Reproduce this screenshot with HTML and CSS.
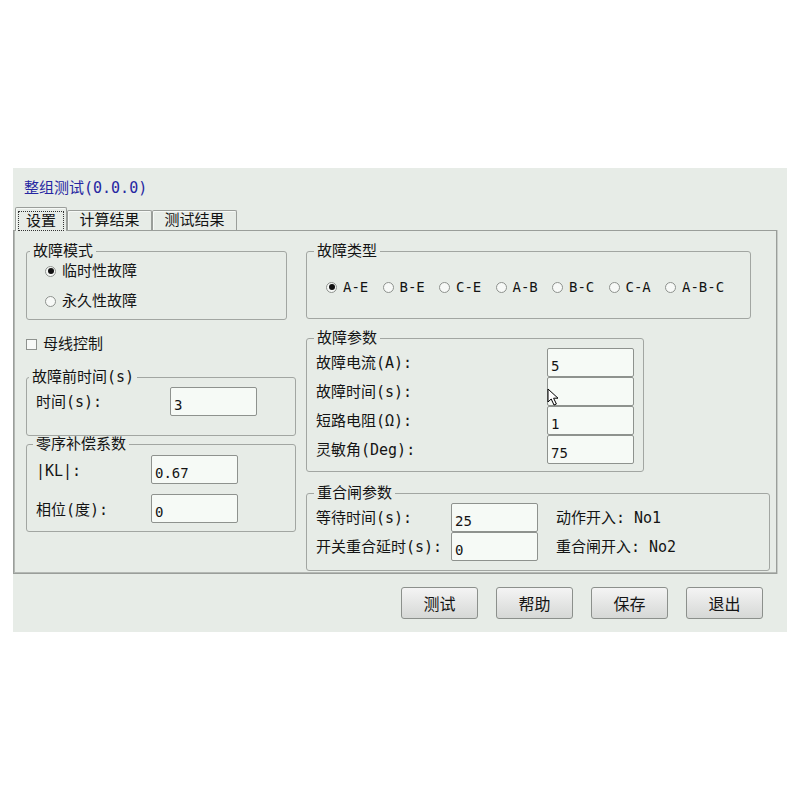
FILE: index.html
```html
<!DOCTYPE html>
<html lang="zh">
<head>
<meta charset="utf-8">
<title>整组测试</title>
<link rel="stylesheet" href="styles.css">
</head>
<body>
<div class="app">
  <div class="title">整组测试(0.0.0)</div>
  <div class="tabs">
    <div class="tab active"><span class="focus">设置</span></div>
    <div class="tab">计算结果</div>
    <div class="tab">测试结果</div>
  </div>
  <div class="pane">
    <div class="col col-left">
      <fieldset class="group g-mode">
        <legend class="lg-near">故障模式</legend>
        <div class="radio-list">
          <div class="opt"><span class="radio on"></span>临时性故障</div>
          <div class="opt"><span class="radio"></span>永久性故障</div>
        </div>
      </fieldset>
      <div class="check-row"><span class="checkbox"></span>母线控制</div>
      <fieldset class="group g-pre">
        <legend class="lg-near">故障前时间(s)</legend>
        <div class="form form-pre">
          <span class="lbl">时间(s):</span>
          <input class="field" type="text" value="3" readonly>
        </div>
      </fieldset>
      <fieldset class="group g-zero">
        <legend>零序补偿系数</legend>
        <div class="form form-zero">
          <span class="lbl lbl-low">|KL|:</span>
          <input class="field" type="text" value="0.67" readonly>
          <span class="lbl lbl-low">相位(度):</span>
          <input class="field" type="text" value="0" readonly>
        </div>
      </fieldset>
    </div>
    <div class="col col-right">
      <fieldset class="group g-type">
        <legend>故障类型</legend>
        <div class="type-row">
          <div class="opt"><span class="radio on"></span>A-E</div>
          <div class="opt"><span class="radio"></span>B-E</div>
          <div class="opt"><span class="radio"></span>C-E</div>
          <div class="opt"><span class="radio"></span>A-B</div>
          <div class="opt"><span class="radio"></span>B-C</div>
          <div class="opt"><span class="radio"></span>C-A</div>
          <div class="opt"><span class="radio"></span>A-B-C</div>
        </div>
      </fieldset>
      <fieldset class="group g-param">
        <legend>故障参数</legend>
        <div class="form form-param">
          <span class="lbl">故障电流(A):</span>
          <input class="field" type="text" value="5" readonly>
          <span class="lbl">故障时间(s):</span>
          <span class="field-wrap">
            <input class="field" type="text" value="" readonly>
            <svg class="cursor" width="14" height="18" viewBox="0 0 14 18"><path d="M1 1 L1 14 L4.2 11 L7 17 L9.4 16 L6.6 10.2 L11 10.2 Z" fill="#fff" stroke="#000" stroke-width="1" stroke-linejoin="round"/></svg>
          </span>
          <span class="lbl">短路电阻(Ω):</span>
          <input class="field" type="text" value="1" readonly>
          <span class="lbl">灵敏角(Deg):</span>
          <input class="field" type="text" value="75" readonly>
        </div>
      </fieldset>
      <fieldset class="group g-reclose">
        <legend>重合闸参数</legend>
        <div class="form form-reclose">
          <span class="lbl">等待时间(s):</span>
          <input class="field" type="text" value="25" readonly>
          <span class="info">动作开入: No1</span>
          <span class="lbl">开关重合延时(s):</span>
          <input class="field" type="text" value="0" readonly>
          <span class="info">重合闸开入: No2</span>
        </div>
      </fieldset>
    </div>
  </div>
  <div class="buttons">
    <button class="btn" type="button">测试</button>
    <button class="btn" type="button">帮助</button>
    <button class="btn" type="button">保存</button>
    <button class="btn" type="button">退出</button>
  </div>
</div>
</body>
</html>
```

FILE: styles.css
```css
* { box-sizing: border-box; }

body {
  margin: 0;
  background: #ffffff;
  font-family: "DejaVu Sans Mono", "Noto Sans CJK SC", monospace;
  font-size: 15px;
  color: #141414;
}

.app {
  margin: 168px 0 0 13px;
  width: 774px;
  height: 464px;
  background: #e7ece7;
  padding-top: 10px;
}

.title {
  padding-left: 11px;
  line-height: 20px;
  height: 20px;
  color: #2626a2;
}

.tabs {
  margin-top: 9px;
  height: 24px;
  display: flex;
  align-items: flex-end;
  padding-left: 2px;
  position: relative;
  z-index: 1;
  margin-bottom: -1px;
}

.tab {
  width: 85px;
  height: 20px;
  margin-bottom: 1px;
  border: 1px solid #9a9e9a;
  border-bottom: none;
  border-radius: 2px 2px 0 0;
  background: #e7ece7;
  line-height: 19px;
  text-align: center;
  box-shadow: inset 1px 1px 0 #f6f9f6;
}

.tab.active {
  width: 52px;
  height: 24px;
  margin-bottom: 0;
  padding: 3px 2px 0 2px;
  line-height: 18px;
}

.focus {
  display: block;
  border: 1px dotted #333;
  height: 20px;
  line-height: 18px;
}

.pane {
  height: 344px;
  width: 764px;
  border: 1px solid #9a9e9a;
  box-shadow: inset 1px -1px 0 #b4b8b4, 1px 0 0 #c8ccc8;
  padding: 12px 0 0 12px;
  display: flex;
  gap: 10px;
  align-items: flex-start;
}

.col {
  display: flex;
  flex-direction: column;
  align-items: flex-start;
}

.group {
  margin: 0;
  min-width: 0;
  border: 1px solid #a2a6a2;
  border-radius: 3px;
  padding: 0 0 0 9px;
}

.group legend {
  font-size: 15px;
  line-height: 16px;
  padding: 0 3px;
  margin-left: -2px;
}

.group legend.lg-near {
  margin-left: -6px;
}

.g-mode { width: 261px; height: 77px; padding-top: 2px; }
.g-mode .radio-list { margin-left: 9px; }
.check-row { margin-top: 14px; height: 20px; display: flex; align-items: center; gap: 6px; line-height: 20px; }
.g-pre { margin-top: 15px; width: 270px; height: 67px; padding-top: 2px; }
.g-pre legend.lg-near { margin-left: -7px; }
.g-zero { width: 270px; height: 96px; padding-top: 3px; }
.g-zero legend { margin-left: -3px; }

.g-type { width: 445px; height: 76px; padding-top: 18px; }
.g-type .type-row { margin-left: 10px; }
.g-param { margin-top: 11px; width: 338px; height: 142px; padding-top: 2px; }
.g-reclose { margin-top: 13px; width: 464px; height: 86px; padding-top: 2px; }

.radio-list {
  display: flex;
  flex-direction: column;
  gap: 10px;
}

.opt {
  display: flex;
  align-items: center;
  height: 20px;
  line-height: 20px;
  white-space: nowrap;
}

.radio {
  width: 11px;
  height: 11px;
  border: 1px solid #8e928e;
  border-radius: 50%;
  background: #f7f9f7;
  margin-right: 6px;
  flex: none;
  display: flex;
  align-items: center;
  justify-content: center;
}

.radio.on::after {
  content: "";
  width: 6px;
  height: 6px;
  border-radius: 50%;
  background: #111;
}

.checkbox {
  width: 11px;
  height: 11px;
  border: 1px solid #8e928e;
  background: #f7f9f7;
  flex: none;
}

.type-row {
  display: grid;
  grid-template-columns: repeat(7, 56.5px);
  font-size: 14px;
}

.form {
  display: grid;
  align-items: center;
}

.form-pre { grid-template-columns: 134px 87px; grid-auto-rows: 29px; }
.form-zero { grid-template-columns: 115px 87px; grid-auto-rows: 29px; row-gap: 10px; }
.form-param { grid-template-columns: 231px 87px; grid-auto-rows: 29px; }
.form-reclose { grid-template-columns: 135px 87px auto; grid-auto-rows: 29px; }

.lbl { line-height: 20px; white-space: nowrap; }
.lbl-low { padding-top: 2px; }
.info { margin-left: 18px; white-space: nowrap; line-height: 20px; }

.field {
  width: 87px;
  height: 29px;
  margin: 0;
  border: 1px solid #8e928e;
  border-radius: 2px;
  background: #f6faf6;
  font: inherit;
  font-size: 14px;
  color: #141414;
  padding: 7px 3px 0 3px;
  outline: none;
}

.field-wrap {
  position: relative;
  width: 87px;
  height: 29px;
  display: block;
}

.cursor {
  position: absolute;
  left: 0;
  top: 11px;
}

.buttons {
  margin-top: 13px;
  display: flex;
  justify-content: flex-end;
  gap: 18px;
  padding-right: 24px;
}

.btn {
  width: 77px;
  height: 32px;
  border: 1px solid #8c908c;
  border-radius: 3px;
  background: linear-gradient(#f4f4f4, #d6d8d6);
  font: inherit;
  font-size: 16px;
  color: #141414;
  padding: 0;
}
```
